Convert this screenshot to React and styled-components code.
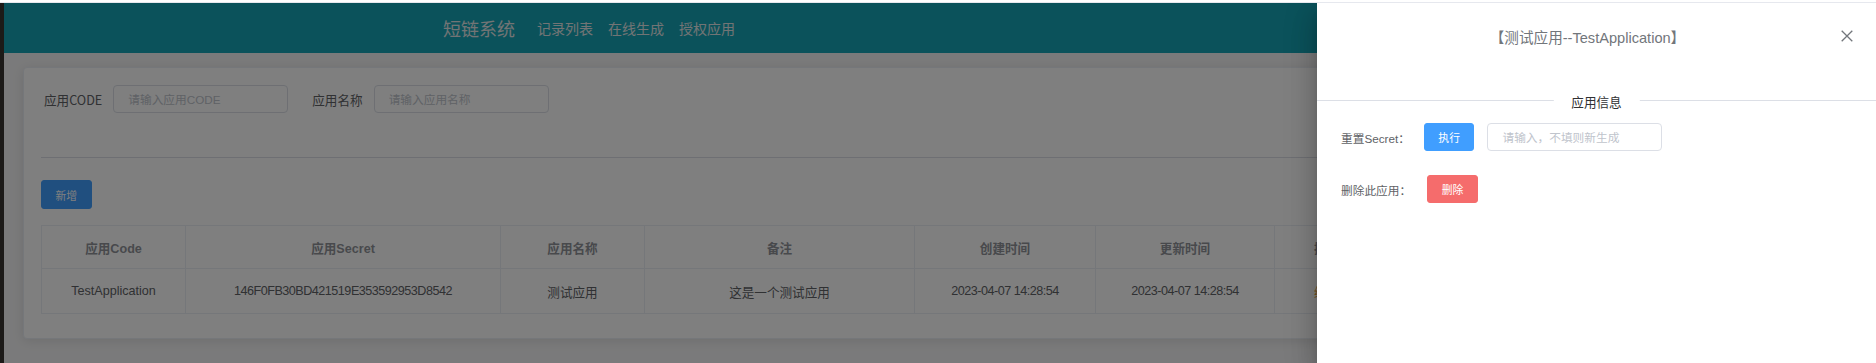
import React from "react";
import styled, { createGlobalStyle } from "styled-components";

const GlobalStyle = createGlobalStyle`
  html, body {
    margin: 0;
    padding: 0;
  }
  body {
    font-family: "Liberation Sans", "Noto Sans CJK SC", sans-serif;
    background: #fff;
  }
  * {
    box-sizing: border-box;
  }
`;

const Screen = styled.div`
  display: flex;
  flex-direction: column;
  width: 1876px;
  height: 363px;
  overflow: hidden;
`;

const TopStrip = styled.div`
  flex: none;
  height: 3px;
  background: #fff;
  border-bottom: 1px solid #e6e8ee;
`;

const Body = styled.div`
  display: flex;
  flex: 1;
  min-height: 0;
`;

const SideEdge = styled.div`
  flex: none;
  width: 4px;
  background: #1c1a18;
`;

const Viewport = styled.div`
  position: relative;
  flex: 1;
  overflow: hidden;
  background: #f5f5f6;
`;

/* ---------- page ---------- */

const Header = styled.header`
  display: flex;
  align-items: center;
  height: 50px;
  padding-left: 439px;
  background: #16a4b6;
  color: #e4e9ea;
`;

const Brand = styled.span`
  font-size: 18px;
  margin-right: 22px;
`;

const NavLink = styled.a`
  font-size: 14px;
  margin-right: 15px;
  color: inherit;
  text-decoration: none;
`;

const Card = styled.section`
  margin: 14px 19px 0;
  padding: 17px 17px 24px;
  background: #fff;
  border: 1px solid #ebeef5;
  border-radius: 4px;
  box-shadow: 0 2px 12px 0 rgba(0, 0, 0, 0.1);
`;

const SearchForm = styled.form`
  display: flex;
  align-items: center;
  height: 28px;
  padding-left: 3px;
`;

const FormItem = styled.div`
  display: flex;
  align-items: center;
  margin-right: 24px;
`;

const FormLabel = styled.label`
  font-family: "Noto Sans CJK SC", sans-serif;
  font-size: 12.6px;
  color: #606266;
  margin-right: 11px;
`;

const TextInput = styled.input`
  width: ${(p) => p.$width || 175}px;
  height: 28px;
  padding: 0 14px;
  border: 1px solid #dcdfe6;
  border-radius: 4px;
  font-family: inherit;
  font-size: 11.7px;
  color: #606266;
  background: #fff;
  outline: none;

  &::placeholder {
    color: #c0c4cc;
  }
`;

const Rule = styled.hr`
  margin: 44px 0 0;
  border: 0;
  height: 1px;
  background: #dcdfe6;
`;

const Toolbar = styled.div`
  display: flex;
  margin-top: 22px;
`;

const Button = styled.button`
  height: ${(p) => p.$height || 28}px;
  padding: 0 13.5px;
  border: 1px solid ${(p) => p.$color};
  border-radius: 3px;
  background: ${(p) => p.$color};
  color: #fff;
  font-family: inherit;
  font-size: 10.8px;
  cursor: pointer;
`;

const Table = styled.table`
  width: 100%;
  margin-top: 16px;
  table-layout: fixed;
  border-collapse: collapse;
  border: 1px solid #ebeef5;
`;

const Th = styled.th`
  height: 43px;
  padding: 0 8px;
  border: 1px solid #ebeef5;
  font-size: 12.6px;
  font-weight: bold;
  color: #909399;
  text-align: center;
  white-space: nowrap;
  overflow: hidden;
`;

const Td = styled.td`
  height: 45px;
  padding: 0 8px;
  border: 1px solid #ebeef5;
  font-size: 12.6px;
  color: #606266;
  text-align: center;
  white-space: nowrap;
  overflow: hidden;
  letter-spacing: ${(p) => (p.$numeric ? "-0.5px" : "normal")};
`;

const TextLink = styled.span`
  color: #e6a23c;
  margin: 0 4px;
`;

/* ---------- drawer ---------- */

const Mask = styled.div`
  position: absolute;
  inset: 0;
  background: rgba(0, 0, 0, 0.5);
`;

const Drawer = styled.aside`
  position: absolute;
  top: 0;
  right: 0;
  bottom: 0;
  width: 559px;
  background: #fff;
  box-shadow: 0 8px 10px -5px rgba(0, 0, 0, 0.2),
    0 16px 24px 2px rgba(0, 0, 0, 0.14), 0 6px 30px 5px rgba(0, 0, 0, 0.12);
`;

const DrawerHeader = styled.div`
  display: flex;
  align-items: center;
  padding: 18px 20px 0;
  color: #72767b;
`;

const DrawerTitle = styled.span`
  flex: 1;
  font-size: 14.6px;
  text-align: center;
`;

const CloseButton = styled.button`
  display: flex;
  align-items: center;
  justify-content: center;
  width: 18px;
  height: 30px;
  padding: 0;
  border: 0;
  background: none;
  color: #72767b;
  cursor: pointer;
`;

const SectionDivider = styled.div`
  position: relative;
  height: 1px;
  margin: 49px 0 22px;
  background: #dcdfe6;
`;

const SectionText = styled.span`
  position: absolute;
  left: 50%;
  top: 50%;
  transform: translate(-50%, -50%);
  padding: 0 18px;
  background: #fff;
  font-size: 12.6px;
  color: #303133;
  white-space: nowrap;
`;

const ActionRow = styled.div`
  display: flex;
  align-items: center;
  height: 28px;
  padding: 0 24px;
  margin-bottom: 24px;
`;

const ActionLabel = styled.span`
  font-size: 11.7px;
  color: #606266;
  margin-right: ${(p) => p.$gap || 14}px;
`;

const columns = [144, 315, 144, 270, 181, 179, 104];

const headers = ["应用Code", "应用Secret", "应用名称", "备注", "创建时间", "更新时间", "操作", "状态"];

const App = () => (
  <>
    <GlobalStyle />
    <Screen>
      <TopStrip />
      <Body>
        <SideEdge />
        <Viewport>
          <Header>
            <Brand>短链系统</Brand>
            <NavLink>记录列表</NavLink>
            <NavLink>在线生成</NavLink>
            <NavLink>授权应用</NavLink>
          </Header>

          <Card>
            <SearchForm>
              <FormItem>
                <FormLabel>应用CODE</FormLabel>
                <TextInput placeholder="请输入应用CODE" />
              </FormItem>
              <FormItem>
                <FormLabel>应用名称</FormLabel>
                <TextInput placeholder="请输入应用名称" />
              </FormItem>
            </SearchForm>
            <Rule />
            <Toolbar>
              <Button type="button" $color="#409eff" $height={29}>
                新增
              </Button>
            </Toolbar>
            <Table>
              <colgroup>
                {columns.map((w, i) => (
                  <col key={i} style={{ width: w }} />
                ))}
                <col />
              </colgroup>
              <thead>
                <tr>
                  {headers.map((h) => (
                    <Th key={h}>{h}</Th>
                  ))}
                </tr>
              </thead>
              <tbody>
                <tr>
                  <Td>TestApplication</Td>
                  <Td $numeric>146F0FB30BD421519E353592953D8542</Td>
                  <Td>测试应用</Td>
                  <Td>这是一个测试应用</Td>
                  <Td $numeric>2023-04-07 14:28:54</Td>
                  <Td $numeric>2023-04-07 14:28:54</Td>
                  <Td>
                    <TextLink>编辑</TextLink>
                  </Td>
                  <Td>启用</Td>
                </tr>
              </tbody>
            </Table>
          </Card>

          <Mask />

          <Drawer>
            <DrawerHeader>
              <DrawerTitle>【测试应用--TestApplication】</DrawerTitle>
              <CloseButton type="button" aria-label="close">
                <svg width="12" height="12" viewBox="0 0 12 12">
                  <path
                    d="M0.7 0.7 L11.3 11.3 M11.3 0.7 L0.7 11.3"
                    stroke="currentColor"
                    strokeWidth="1.3"
                    fill="none"
                  />
                </svg>
              </CloseButton>
            </DrawerHeader>

            <SectionDivider>
              <SectionText>应用信息</SectionText>
            </SectionDivider>

            <ActionRow>
              <ActionLabel>重置Secret：</ActionLabel>
              <Button type="button" $color="#409eff">
                执行
              </Button>
              <TextInput
                placeholder="请输入，不填则新生成"
                style={{ marginLeft: 13 }}
              />
            </ActionRow>
            <ActionRow>
              <ActionLabel $gap={16}>删除此应用：</ActionLabel>
              <Button type="button" $color="#f56c6c">
                删除
              </Button>
            </ActionRow>
          </Drawer>
        </Viewport>
      </Body>
    </Screen>
  </>
);

export default App;
